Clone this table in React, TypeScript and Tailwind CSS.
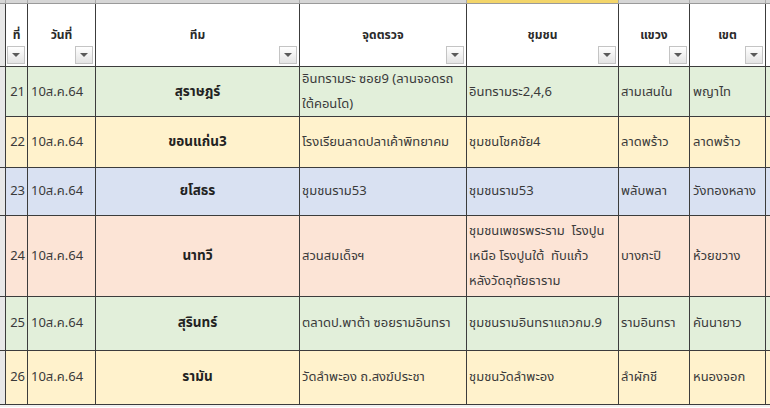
import React from 'react';

type Row = {
  no: string;
  date: string;
  team: string;
  point: string[];
  community: string[];
  khwaeng: string;
  khet: string;
  bg: string;
  h: string;
};

const rows: Row[] = [
  { no: '21', date: '10ส.ค.64', team: 'สุราษฎร์', point: ['อินทรามระ ซอย9 (ลานจอดรถ', 'ใต้คอนโด)'], community: ['อินทรามระ2,4,6'], khwaeng: 'สามเสนใน', khet: 'พญาไท', bg: 'bg-[#e2efda]', h: 'h-[50px]' },
  { no: '22', date: '10ส.ค.64', team: 'ขอนแก่น3', point: ['โรงเรียนลาดปลาเค้าพิทยาคม'], community: ['ชุมชนโชคชัย4'], khwaeng: 'ลาดพร้าว', khet: 'ลาดพร้าว', bg: 'bg-[#fff2cc]', h: 'h-[51px]' },
  { no: '23', date: '10ส.ค.64', team: 'ยโสธร', point: ['ชุมชนราม53'], community: ['ชุมชนราม53'], khwaeng: 'พลับพลา', khet: 'วังทองหลาง', bg: 'bg-[#d9e1f2]', h: 'h-[48px]' },
  { no: '24', date: '10ส.ค.64', team: 'นาทวี', point: ['สวนสมเด็จฯ'], community: ['ชุมชนเพชรพระราม  โรงปูน', 'เหนือ โรงปูนใต้  ทับแก้ว', 'หลังวัดอุทัยธาราม'], khwaeng: 'บางกะปิ', khet: 'ห้วยขวาง', bg: 'bg-[#fce4d6]', h: 'h-[81px]' },
  { no: '25', date: '10ส.ค.64', team: 'สุรินทร์', point: ['ตลาดป.พาต้า ซอยรามอินทรา'], community: ['ชุมชนรามอินทราแถวกม.9'], khwaeng: 'รามอินทรา', khet: 'คันนายาว', bg: 'bg-[#e2efda]', h: 'h-[54px]' },
  { no: '26', date: '10ส.ค.64', team: 'รามัน', point: ['วัดลำพะอง ถ.สงฆ์ประชา'], community: ['ชุมชนวัดลำพะอง'], khwaeng: 'ลำผักชี', khet: 'หนองจอก', bg: 'bg-[#fff2cc]', h: 'h-[54px]' },
];

const cols = 'grid grid-cols-[5px_22px_68px_204px_167px_152px_71px_76px_1fr]';

const FilterButton: React.FC = () => (
  <div className="absolute right-[2px] bottom-[2px] w-[18px] h-[18px] border border-[#c4c4c4] bg-gradient-to-b from-white to-[#e4e4e4] flex items-center justify-center">
    <div className="w-0 h-0 border-l-[4px] border-r-[4px] border-t-[4px] border-l-transparent border-r-transparent border-t-[#5a5a5a]" />
  </div>
);

const HeaderCell: React.FC<{ label: string }> = ({ label }) => (
  <div className="relative border-l border-[#3c3c3c] bg-white flex items-center justify-center">
    <span className="font-bold text-[12px] text-[#2a2a2a]">{label}</span>
    <FilterButton />
  </div>
);

const App: React.FC = () => {
  return (
    <div className="w-[770px] h-[408px] overflow-hidden bg-white text-[#3a3a3a] text-[13px] leading-[25px]" style={{ fontFamily: 'Tahoma, "Noto Sans Thai", "Loma", "Garuda", sans-serif' }}>
      <div className={`${cols} h-[4px] bg-[#d6d6d6] border-b border-[#9a9a9a]`}>
        <div />
        <div className="border-l border-[#aaa]" />
        <div className="border-l border-[#aaa]" />
        <div className="border-l border-[#aaa]" />
        <div className="border-l border-[#aaa]" />
        <div className="border-l border-[#aaa] bg-[#f3d56a]" />
        <div className="border-l border-[#aaa]" />
        <div className="border-l border-[#aaa]" />
        <div className="border-l border-[#aaa]" />
      </div>
      <div className={`${cols} h-[63px] border-b border-[#3c3c3c]`}>
        <div className="bg-[#e8e8e8]" />
        <HeaderCell label="ที่" />
        <HeaderCell label="วันที่" />
        <HeaderCell label="ทีม" />
        <HeaderCell label="จุดตรวจ" />
        <HeaderCell label="ชุมชน" />
        <HeaderCell label="แขวง" />
        <HeaderCell label="เขต" />
        <div className="border-l border-[#3c3c3c]" />
      </div>
      {rows.map((r) => (
        <div key={r.no} className={`${cols} ${r.h} ${r.bg} border-b border-[#3c3c3c]`}>
          <div className="bg-[#e8e8e8]" />
          <div className="border-l border-[#3c3c3c] flex items-center justify-end pr-[2px]">{r.no}</div>
          <div className="border-l border-[#3c3c3c] flex items-center pl-[3px]">{r.date}</div>
          <div className="border-l border-[#3c3c3c] flex items-center justify-center font-bold text-[13.5px] text-[#222]">{r.team}</div>
          <div className="border-l border-[#3c3c3c] flex flex-col justify-center pl-[2px]">
            {r.point.map((t) => (
              <span key={t} className="whitespace-pre">{t}</span>
            ))}
          </div>
          <div className="border-l border-[#3c3c3c] flex flex-col justify-center pl-[2px]">
            {r.community.map((t) => (
              <span key={t} className="whitespace-pre">{t}</span>
            ))}
          </div>
          <div className="border-l border-[#3c3c3c] flex items-center pl-[2px]">{r.khwaeng}</div>
          <div className="border-l border-[#3c3c3c] flex items-center pl-[3px]">{r.khet}</div>
          <div className="border-l border-[#3c3c3c]" />
        </div>
      ))}
      <div className="h-[2px] bg-[#f0f0f0]" />
    </div>
  );
};

export default App;
